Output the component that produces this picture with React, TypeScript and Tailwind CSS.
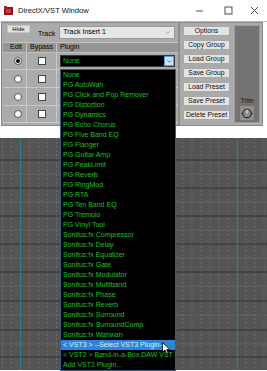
import { ChevronDown } from "lucide-react";

const plugins = [
  "None",
  "PG AutoWah",
  "PG Click and Pop Remover",
  "PG Distortion",
  "PG Dynamics",
  "PG Echo Chorus",
  "PG Five Band EQ",
  "PG Flanger",
  "PG Guitar Amp",
  "PG PeakLimit",
  "PG Reverb",
  "PG RingMod",
  "PG RTA",
  "PG Ten Band EQ",
  "PG Tremolo",
  "PG Vinyl Tool",
  "Sonitus:fx Compressor",
  "Sonitus:fx Delay",
  "Sonitus:fx Equalizer",
  "Sonitus:fx Gate",
  "Sonitus:fx Modulator",
  "Sonitus:fx Multiband",
  "Sonitus:fx Phase",
  "Sonitus:fx Reverb",
  "Sonitus:fx Surround",
  "Sonitus:fx SurroundComp",
  "Sonitus:fx Wahwah",
  "< VST3 > --Select VST3 Plugin--",
  "< VST2 > Band-in-a-Box DAW VST Plugin",
  "Add VST2 Plugin...",
];

const buttons = [
  "Options",
  "Copy Group",
  "Load Group",
  "Save Group",
  "Load Preset",
  "Save Preset",
  "Delete Preset",
];

const TitleBar = () => (
  <div className="flex h-[22px] items-center border-b border-[#bdbdbd]">
    <svg width="10" height="10" viewBox="0 0 10 10" className="ml-[4px]">
      <rect x="0" y="1" width="9" height="8" fill="#8b1a1a" />
      <rect x="2" y="3" width="5" height="4" fill="#d23a3a" />
      <rect x="0" y="0" width="3" height="3" fill="#b02020" />
    </svg>
    <span className="ml-[4px] text-[7.6px] text-[#111]">DirectX/VST Window</span>
    <div className="ml-auto flex items-center">
      <svg width="9" height="9" viewBox="0 0 9 9" className="mr-[20px]">
        <line x1="1" y1="5" x2="8" y2="5" stroke="#222" strokeWidth="0.8" />
      </svg>
      <svg width="9" height="9" viewBox="0 0 9 9" className="mr-[17px]">
        <rect x="1" y="1" width="7" height="7" fill="none" stroke="#222" strokeWidth="0.8" />
      </svg>
      <svg width="9" height="9" viewBox="0 0 9 9" className="mr-[8px]">
        <path d="M1 1 L8 8 M8 1 L1 8" stroke="#222" strokeWidth="0.8" />
      </svg>
    </div>
  </div>
);

const Radio = ({ on }: { on?: boolean }) => (
  <div className="flex h-[8px] w-[8px] items-center justify-center rounded-full border border-[#555] bg-white">
    {on && <div className="h-[4px] w-[4px] rounded-full bg-black" />}
  </div>
);

const Check = () => <div className="h-[8px] w-[8px] border border-[#444] bg-white" />;

const Row = ({ h, first }: { h: string; first?: boolean }) => (
  <div className={`flex ${h} border-b border-[#c9c9c9]`}>
    <div className="flex w-[24px] items-center justify-center border-r border-[#c9c9c9] pl-[6px]">
      <Radio on={first} />
    </div>
    <div className="flex w-[30px] items-center justify-center border-r border-[#c9c9c9]">
      <Check />
    </div>
    <div className="flex flex-1 items-center pl-[3px]">
      {first && (
        <div className="flex h-[12px] w-[115px] border border-[#3a3a3a] bg-black">
          <div className="flex flex-1 items-center pl-[2px] text-[7px] text-[#20c020]">None</div>
          <div className="flex w-[10px] items-center justify-center border border-[#569de5] bg-[#cce4f7]">
            <ChevronDown className="h-[7px] w-[7px] text-[#333]" strokeWidth={2} />
          </div>
        </div>
      )}
    </div>
  </div>
);

const Grid = () => {
  const hLines = [22, 50, 78, 106, 134, 163, 192, 219];
  const vLines: number[] = [];
  for (let x = 2.5; x < 267; x += 9.02) vLines.push(x);
  return (
    <svg width="267" height="232" className="block">
      <rect width="267" height="232" fill="#545454" />
      {hLines.map((y) => (
        <line key={`m${y}`} x1="0" x2="267" y1={y + 14} y2={y + 14} stroke="#626262" strokeWidth="1" />
      ))}
      {vLines.map((x, i) => (
        <line
          key={`v${i}`}
          x1={x}
          x2={x}
          y1="0"
          y2="232"
          stroke="#6d6d6d"
          strokeWidth="1"
          strokeDasharray="2 2"
        />
      ))}
      {hLines.map((y) => (
        <line key={`h${y}`} x1="0" x2="267" y1={y} y2={y} stroke="#2e2e2e" strokeWidth="1.2" />
      ))}
      <line x1="20.5" x2="20.5" y1="0" y2="232" stroke="#2f7d86" strokeWidth="1.2" />
      <line x1="237.5" x2="237.5" y1="0" y2="232" stroke="#2f7d86" strokeWidth="1.2" />
    </svg>
  );
};

export default function App() {
  return (
    <div className="relative h-[371px] w-[267px] overflow-hidden bg-white font-['Liberation_Sans',Arial,sans-serif] text-[7px] text-black">
      <TitleBar />

      <div className="ml-[1px] flex h-[104px] w-[262px] border border-[#8a8a8a] bg-[#ababab] pl-[1px]">
        <div className="flex w-[177px] flex-col border-r-2 border-[#8c8c8c]">
          <div className="flex h-[19px] items-start">
            <div className="ml-[4px] mt-[2px] flex h-[8px] w-[23px] items-center justify-center border border-[#c4c4c4] bg-[#e2e2e2] text-[6px]">
              Hide
            </div>
            <span className="ml-[8px] mt-[6px] text-[7px]">Track</span>
            <div className="ml-[4px] mt-[3px] flex h-[13px] w-[116px] items-center border border-[#9a9a9a] bg-[#e6e6e6] pl-[3px]">
              <span>Track Insert 1</span>
              <ChevronDown className="ml-auto mr-[3px] h-[7px] w-[7px] text-[#555]" strokeWidth={1.5} />
            </div>
          </div>
          <div className="flex h-[11px] border-y border-[#c0c0c0] bg-[#959595]">
            <div className="flex w-[24px] items-center justify-center border-r border-[#c0c0c0] pl-[3px]">Edit</div>
            <div className="flex w-[30px] items-center justify-center border-r border-[#c0c0c0]">Bypass</div>
            <div className="flex flex-1 items-center pl-[3px]">Plugin</div>
          </div>
          <Row h="h-[17px]" first />
          <Row h="h-[18px]" />
          <Row h="h-[18px]" />
          <Row h="h-[17px]" />
        </div>

        <div className="ml-[3px] flex w-[47px] flex-col gap-[4px] pt-[3px]">
          {buttons.map((b) => (
            <div
              key={b}
              className="flex h-[10px] items-center justify-center border border-[#a8a8a8] bg-[#e3e3e3] text-[6.8px] text-[#111]"
            >
              {b}
            </div>
          ))}
        </div>

        <div className="ml-[4px] mt-[2px] flex h-[98px] w-[26px] flex-col items-center justify-end border border-[#9c9c9c] bg-[#737373] pb-[2px]">
          <span className="text-[6.5px] text-[#111]">Trim</span>
          <div className="flex h-[14px] w-[14px] items-center justify-center bg-[#8e8e8e]">
            <svg width="12" height="12" viewBox="0 0 12 12">
              <circle cx="6" cy="6.5" r="4.3" fill="#8e8e8e" stroke="#111" strokeWidth="1" />
              <line x1="6" y1="6.5" x2="6" y2="2.5" stroke="#eee" strokeWidth="1" />
              <line x1="0.5" y1="6.5" x2="1.8" y2="6.5" stroke="#111" strokeWidth="0.8" />
              <line x1="10.2" y1="6.5" x2="11.5" y2="6.5" stroke="#111" strokeWidth="0.8" />
            </svg>
          </div>
        </div>
      </div>

      <div className="mt-[12px]">
        <Grid />
      </div>

      <div className="absolute left-[60px] top-[69px] w-[116px] border border-[#2a5f93] bg-black">
        {plugins.map((p, i) => (
          <div
            key={p}
            className={`h-[10px] overflow-hidden whitespace-nowrap pl-[2px] leading-[10px] ${
              i === 27 ? "bg-[#2f84d9] text-[#d9eeff]" : "text-[#20c020]"
            }`}
          >
            {p}
          </div>
        ))}
      </div>

      <svg width="9" height="13" viewBox="0 0 9 13" className="absolute left-[162px] top-[342px]">
        <path d="M0.5 0.5 L0.5 10 L3 8 L4.7 12 L6.2 11.3 L4.6 7.6 L8 7.6 Z" fill="#fff" stroke="#000" strokeWidth="0.8" />
      </svg>
    </div>
  );
}
